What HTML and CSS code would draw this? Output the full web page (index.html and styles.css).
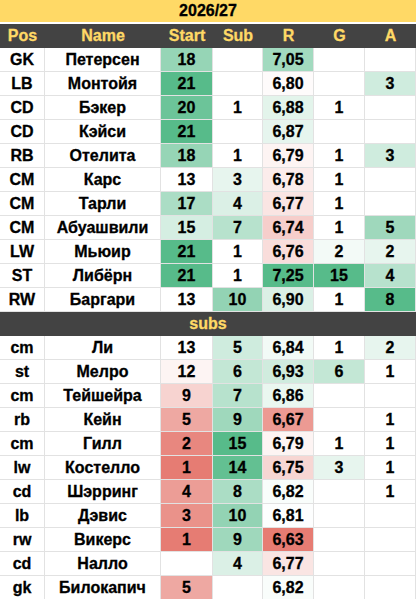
FILE: index.html
```html
<!DOCTYPE html>
<html lang="ru">
<head>
<meta charset="utf-8">
<title>2026/27</title>
<link rel="stylesheet" href="styles.css">
</head>
<body>
<div class="sheet">
  <div class="title">2026/27</div>

  <div class="hd">Pos</div><div class="hd">Name</div><div class="hd">Start</div><div class="hd">Sub</div><div class="hd">R</div><div class="hd">G</div><div class="hd">A</div>

  <div class="c">GK</div><div class="c">Петерсен</div><div class="c" style="background:rgb(150,213,182)">18</div><div class="c"></div><div class="c" style="background:rgb(162,218,191)">7,05</div><div class="c"></div><div class="c"></div>
  <div class="c">LB</div><div class="c">Монтойя</div><div class="c" style="background:rgb(87,187,138)">21</div><div class="c"></div><div class="c" style="background:rgb(254,251,251)">6,80</div><div class="c"></div><div class="c" style="background:rgb(207,236,222)">3</div>
  <div class="c">CD</div><div class="c">Бэкер</div><div class="c" style="background:rgb(108,196,153)">20</div><div class="c">1</div><div class="c" style="background:rgb(227,244,235)">6,88</div><div class="c">1</div><div class="c"></div>
  <div class="c">CD</div><div class="c">Кэйси</div><div class="c" style="background:rgb(87,187,138)">21</div><div class="c"></div><div class="c" style="background:rgb(230,245,238)">6,87</div><div class="c"></div><div class="c"></div>
  <div class="c">RB</div><div class="c">Отелита</div><div class="c" style="background:rgb(150,213,182)">18</div><div class="c">1</div><div class="c" style="background:rgb(253,244,243)">6,79</div><div class="c">1</div><div class="c" style="background:rgb(207,236,222)">3</div>
  <div class="c">CM</div><div class="c">Карс</div><div class="c">13</div><div class="c" style="background:rgb(231,245,238)">3</div><div class="c" style="background:rgb(251,236,235)">6,78</div><div class="c">1</div><div class="c"></div>
  <div class="c">CM</div><div class="c">Тарли</div><div class="c" style="background:rgb(171,221,197)">17</div><div class="c" style="background:rgb(219,240,230)">4</div><div class="c" style="background:rgb(250,229,227)">6,77</div><div class="c">1</div><div class="c"></div>
  <div class="c">CM</div><div class="c">Абуашвили</div><div class="c" style="background:rgb(213,238,226)">15</div><div class="c" style="background:rgb(183,226,205)">7</div><div class="c" style="background:rgb(246,206,203)">6,74</div><div class="c">1</div><div class="c" style="background:rgb(159,216,188)">5</div>
  <div class="c">LW</div><div class="c">Мьюир</div><div class="c" style="background:rgb(87,187,138)">21</div><div class="c">1</div><div class="c" style="background:rgb(249,221,219)">6,76</div><div class="c" style="background:rgb(243,250,247)">2</div><div class="c" style="background:rgb(231,245,238)">2</div>
  <div class="c">ST</div><div class="c">Либёрн</div><div class="c" style="background:rgb(87,187,138)">21</div><div class="c">1</div><div class="c" style="background:rgb(87,187,138)">7,25</div><div class="c" style="background:rgb(87,187,138)">15</div><div class="c" style="background:rgb(183,226,205)">4</div>
  <div class="c">RW</div><div class="c">Баргари</div><div class="c">13</div><div class="c" style="background:rgb(147,211,180)">10</div><div class="c" style="background:rgb(219,240,230)">6,90</div><div class="c">1</div><div class="c" style="background:rgb(87,187,138)">8</div>

  <div class="section">subs</div>

  <div class="c">cm</div><div class="c">Ли</div><div class="c">13</div><div class="c" style="background:rgb(207,236,222)">5</div><div class="c" style="background:rgb(242,250,246)">6,84</div><div class="c">1</div><div class="c" style="background:rgb(231,245,238)">2</div>
  <div class="c">st</div><div class="c">Мелро</div><div class="c" style="background:rgb(253,244,243)">12</div><div class="c" style="background:rgb(195,231,213)">6</div><div class="c" style="background:rgb(208,236,222)">6,93</div><div class="c" style="background:rgb(195,231,213)">6</div><div class="c">1</div>
  <div class="c">cm</div><div class="c">Тейшейра</div><div class="c" style="background:rgb(247,211,208)">9</div><div class="c" style="background:rgb(183,226,205)">7</div><div class="c" style="background:rgb(234,247,240)">6,86</div><div class="c"></div><div class="c"></div>
  <div class="c">rb</div><div class="c">Кейн</div><div class="c" style="background:rgb(238,168,162)">5</div><div class="c" style="background:rgb(159,216,188)">9</div><div class="c" style="background:rgb(236,154,147)">6,67</div><div class="c"></div><div class="c">1</div>
  <div class="c">cm</div><div class="c">Гилл</div><div class="c" style="background:rgb(232,135,127)">2</div><div class="c" style="background:rgb(87,187,138)">15</div><div class="c" style="background:rgb(253,244,243)">6,79</div><div class="c">1</div><div class="c">1</div>
  <div class="c">lw</div><div class="c">Костелло</div><div class="c" style="background:rgb(230,124,115)">1</div><div class="c" style="background:rgb(99,192,146)">14</div><div class="c" style="background:rgb(247,214,211)">6,75</div><div class="c" style="background:rgb(231,245,238)">3</div><div class="c">1</div>
  <div class="c">cd</div><div class="c">Шэрринг</div><div class="c" style="background:rgb(236,157,150)">4</div><div class="c" style="background:rgb(171,221,197)">8</div><div class="c" style="background:rgb(249,253,251)">6,82</div><div class="c"></div><div class="c">1</div>
  <div class="c">lb</div><div class="c">Дэвис</div><div class="c" style="background:rgb(234,146,138)">3</div><div class="c" style="background:rgb(147,211,180)">10</div><div class="c" style="background:rgb(253,254,254)">6,81</div><div class="c"></div><div class="c"></div>
  <div class="c">rw</div><div class="c">Викерс</div><div class="c" style="background:rgb(230,124,115)">1</div><div class="c" style="background:rgb(159,216,188)">9</div><div class="c" style="background:rgb(230,124,115)">6,63</div><div class="c"></div><div class="c"></div>
  <div class="c">cd</div><div class="c">Налло</div><div class="c"></div><div class="c" style="background:rgb(219,240,230)">4</div><div class="c" style="background:rgb(250,229,227)">6,77</div><div class="c"></div><div class="c"></div>
  <div class="c">gk</div><div class="c">Билокапич</div><div class="c" style="background:rgb(238,168,162)">5</div><div class="c"></div><div class="c" style="background:rgb(249,253,251)">6,82</div><div class="c"></div><div class="c"></div>
</div>
</body>
</html>
```

FILE: styles.css
```css
* { box-sizing: border-box; }

html, body {
  margin: 0;
  padding: 0;
  background: #ffffff;
}

body {
  font-family: "Liberation Sans", Arial, sans-serif;
  font-weight: bold;
  font-size: 16px;
  color: #000000;
  -webkit-text-stroke: 0.3px currentColor;
}

.sheet {
  display: grid;
  grid-template-columns: 45px 116px 52px 50px 51px 51px 51px;
  grid-auto-rows: 24px;
  width: 416px;
  border-bottom: 1px solid #3c3c3c;
}

.title {
  grid-column: 1 / -1;
  align-self: start;
  height: 22px;
  background: #ffd966;
  display: flex;
  align-items: center;
  justify-content: center;
  line-height: 1;
}

.hd,
.section {
  background: #434343;
  color: #ffd966;
  display: flex;
  align-items: center;
  justify-content: center;
  line-height: 1;
}

.section {
  grid-column: 1 / -1;
}

.c {
  display: flex;
  align-items: center;
  justify-content: center;
  border-right: 1px solid #e2e2e2;
  border-bottom: 1px solid #e2e2e2;
  line-height: 1;
  white-space: nowrap;
  overflow: hidden;
}
```
